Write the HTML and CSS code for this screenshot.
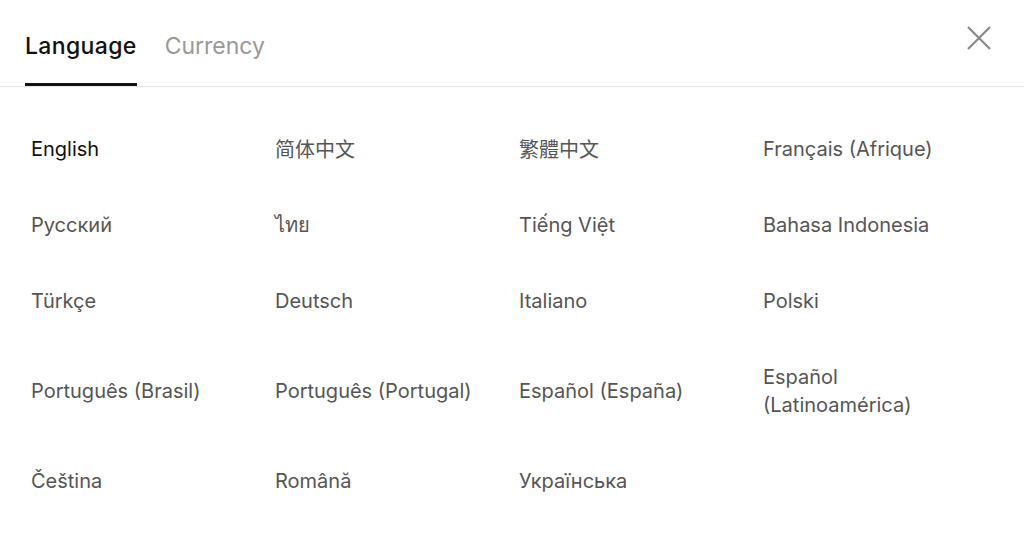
FILE: index.html
```html
<!DOCTYPE html>
<html>
<head>
<meta charset="utf-8">
<link rel="stylesheet" href="styles.css">
</head>
<body>
<div class="dialog">
  <div class="header">
    <div class="tabs">
      <div class="tab active">Language</div>
      <div class="tab">Currency</div>
    </div>
    <button class="close" aria-label="Close">
      <svg width="24" height="24" viewBox="0 0 24 24"><path d="M1 1L23 23M23 1L1 23" stroke="#8a8a8a" stroke-width="2.2" fill="none"/></svg>
    </button>
  </div>
  <div class="grid">
    <div class="cell selected">English</div>
    <div class="cell cjk">简体中文</div>
    <div class="cell cjk tc">繁體中文</div>
    <div class="cell">Français (Afrique)</div>
    <div class="cell">Русский</div>
    <div class="cell">ไทย</div>
    <div class="cell">Tiếng Việt</div>
    <div class="cell">Bahasa Indonesia</div>
    <div class="cell">Türkçe</div>
    <div class="cell">Deutsch</div>
    <div class="cell">Italiano</div>
    <div class="cell">Polski</div>
    <div class="cell">Português (Brasil)</div>
    <div class="cell">Português (Portugal)</div>
    <div class="cell">Español (España)</div>
    <div class="cell">Español<br>(Latinoamérica)</div>
    <div class="cell">Čeština</div>
    <div class="cell">Română</div>
    <div class="cell">Українська</div>
  </div>
</div>
</body>
</html>
```
FILE: styles.css
```css
* { box-sizing: border-box; }
body {
  margin: 0;
  background: #fff;
  font-family: Inter, "Noto Sans", "Noto Sans CJK SC", sans-serif;
}
.dialog { width: 1024px; height: 536px; }
.header {
  display: flex;
  justify-content: space-between;
  align-items: flex-start;
  border-bottom: 1px solid #e6e6e6;
  height: 87px;
  padding-left: 25px;
  padding-right: 33px;
}
.tabs { display: flex; gap: 28px; padding-top: 30px; }
.tab {
  font-size: 23px;
  line-height: 32px;
  color: #999;
  height: 56px;
  border-bottom: 3px solid transparent;
}
.tab.active {
  color: #111;
  font-weight: 500;
  letter-spacing: 0.35px;
  border-bottom-color: #111;
}
.close {
  margin-top: 26px;
  border: 0;
  background: none;
  padding: 0;
  width: 24px;
  height: 24px;
  cursor: pointer;
}
.close svg { display: block; }
.grid {
  display: grid;
  grid-template-columns: repeat(4, 244px);
  padding: 24px 0 0 31px;
  align-items: center;
}
.cell {
  font-size: 20px;
  line-height: 28px;
  color: #555;
  padding: 24px 0;
}
.cell.selected { color: #111; }
.cell.cjk { font-family: "Noto Sans CJK SC", sans-serif; }
.cell.tc { font-family: "Noto Sans CJK TC", sans-serif; }
```
